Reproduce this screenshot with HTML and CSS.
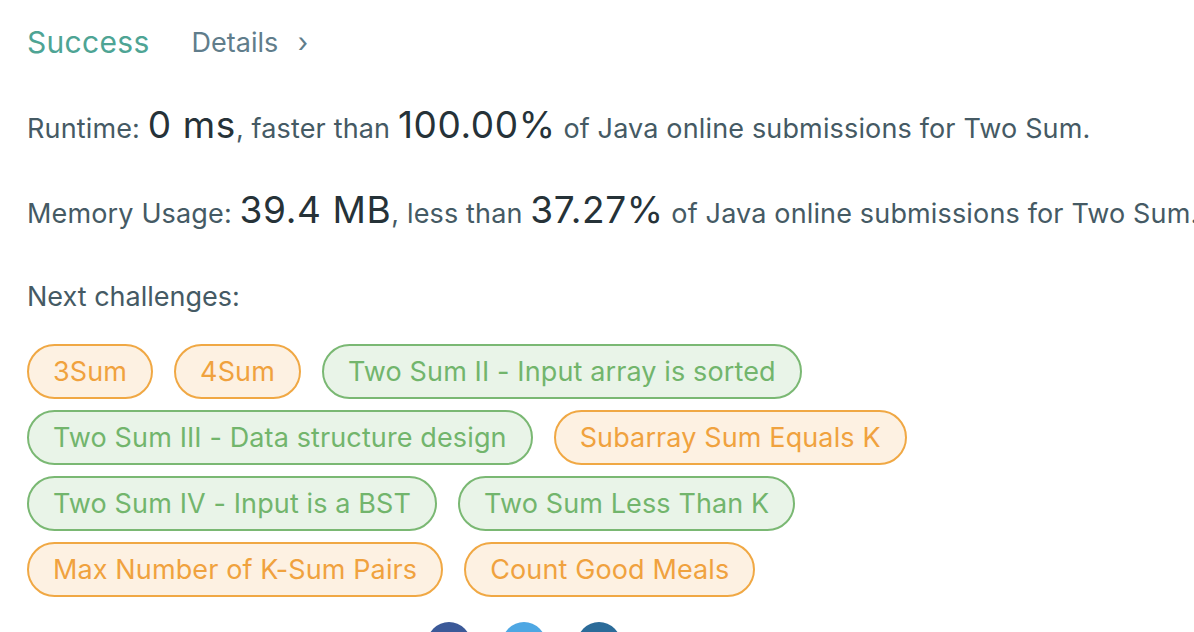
FILE: index.html
```html
<!DOCTYPE html>
<html>
<head>
<meta charset="utf-8">
<link rel="stylesheet" href="styles.css">
</head>
<body>
<div class="page">
  <div class="header">
    <span class="status">Success</span>
    <a class="details">Details <span class="chev">›</span></a>
  </div>
  <div class="stat runtime">Runtime: <span class="big">0 ms</span>, faster than <span class="big">100.00%</span> of Java online submissions for Two Sum.</div>
  <div class="stat memory">Memory Usage: <span class="big">39.4 MB</span>, less than <span class="big">37.27%</span> of Java online submissions for Two Sum.</div>
  <div class="next">Next challenges:</div>
  <div class="tags">
    <span class="tag medium">3Sum</span>
    <span class="tag medium">4Sum</span>
    <span class="tag easy">Two Sum II - Input array is sorted</span>
    <span class="tag easy">Two Sum III - Data structure design</span>
    <span class="tag medium">Subarray Sum Equals K</span>
    <span class="tag easy">Two Sum IV - Input is a BST</span>
    <span class="tag easy">Two Sum Less Than K</span>
    <span class="tag medium">Max Number of K-Sum Pairs</span>
    <span class="tag medium">Count Good Meals</span>
  </div>
  <div class="share">
    <span class="circle fb"></span>
    <span class="circle tw"></span>
    <span class="circle li"></span>
  </div>
</div>
</body>
</html>
```
FILE: styles.css
```css
html, body {
  margin: 0;
  padding: 0;
  background: #fff;
  overflow: hidden;
}
body {
  font-family: Inter, "Liberation Sans", sans-serif;
  color: #455a64;
}
.page {
  padding: 22px 0 0 27px;
  white-space: nowrap;
}
.header {
  display: flex;
  align-items: center;
  gap: 42px;
  height: 40px;
}
.status {
  font-size: 30px;
  letter-spacing: 0.3px;
  color: #4ea494;
  font-weight: 400;
}
.details {
  font-size: 27px;
  color: #607d8b;
}
.chev {
  margin-left: 12px;
}
.stat {
  font-size: 27px;
  line-height: 44px;
  letter-spacing: 0.15px;
}
.runtime {
  margin-top: 41px;
}
.memory {
  margin-top: 37px;
}
.big {
  font-size: 37px;
  letter-spacing: 0.6px;
  color: #263238;
}
.next {
  font-size: 27px;
  margin-top: 45px;
  line-height: 32px;
}
.tags {
  margin-top: 31px;
  display: flex;
  flex-wrap: wrap;
  column-gap: 21px;
  row-gap: 11px;
  width: 900px;
}
.tag {
  display: inline-flex;
  align-items: center;
  height: 55px;
  box-sizing: border-box;
  padding: 0 24px;
  border-radius: 28px;
  border: 2px solid;
  font-size: 27px;
  letter-spacing: 0.12px;
}
.medium {
  color: #f0a23e;
  border-color: #f0a844;
  background: #fdf1e2;
}
.easy {
  color: #72b56c;
  border-color: #7ab873;
  background: #e9f4e8;
}
.share {
  display: flex;
  gap: 31px;
  margin-top: 25px;
  padding-left: 400px;
}
.circle {
  width: 44px;
  height: 44px;
  border-radius: 50%;
}
.fb { background: #3b5998; }
.tw { background: #4ea7e3; }
.li { background: #2b6b99; }
```
